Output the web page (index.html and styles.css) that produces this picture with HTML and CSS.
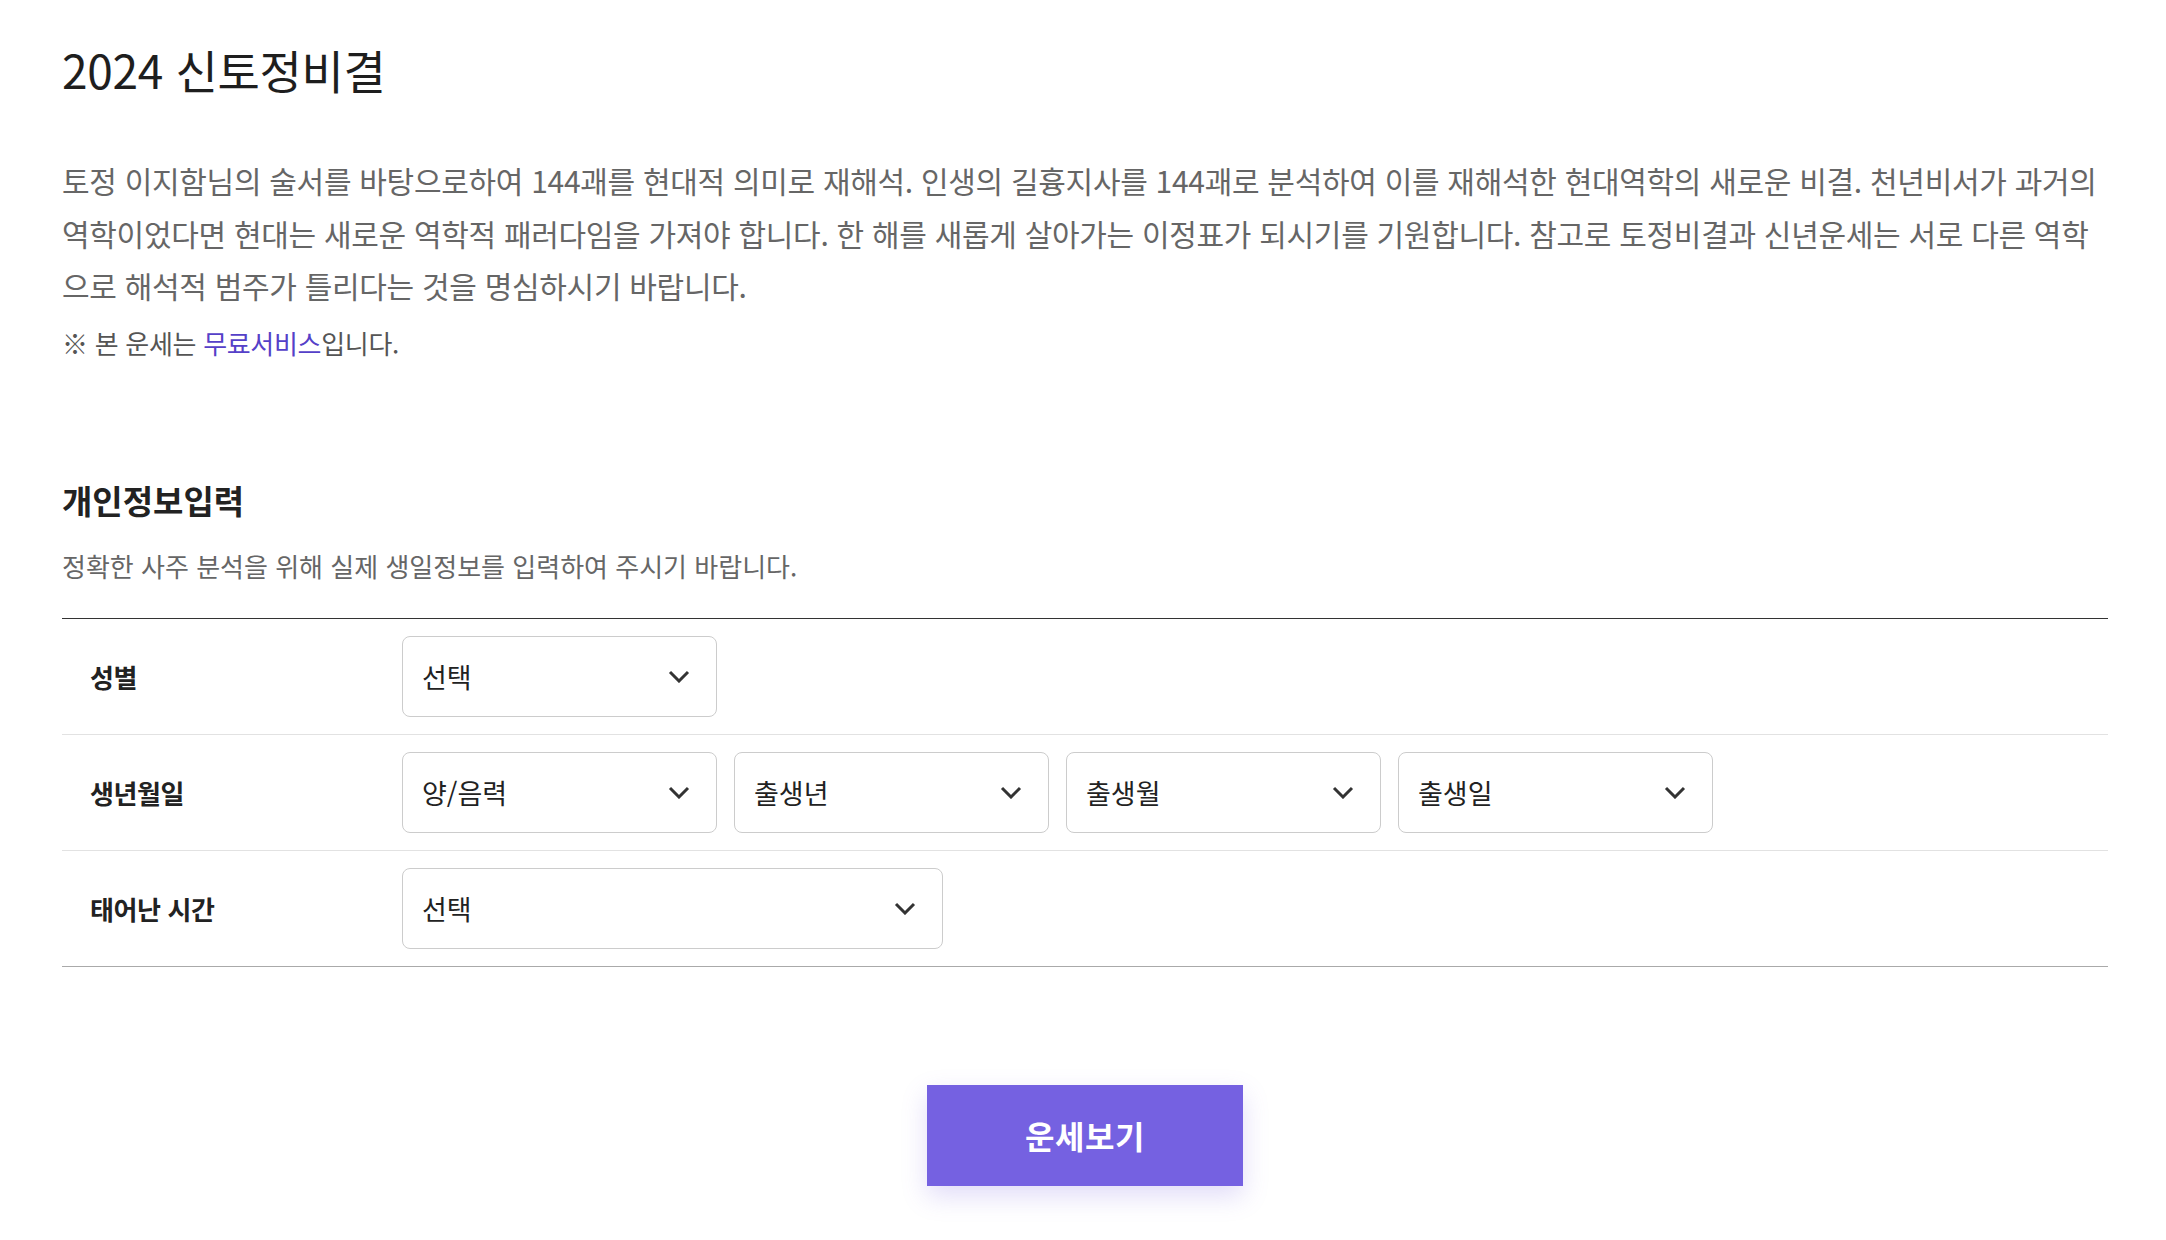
FILE: index.html
```html
<!DOCTYPE html>
<html lang="ko">
<head>
<meta charset="utf-8">
<title>2024 신토정비결</title>
<link rel="stylesheet" href="styles.css">
</head>
<body>
<main class="page">
  <h1 class="title">2024 신토정비결</h1>
  <p class="intro">토정 이지함님의 술서를 바탕으로하여 144괘를 현대적 의미로 재해석. 인생의 길흉지사를 144괘로 분석하여 이를 재해석한 현대역학의 새로운 비결. 천년비서가 과거의 역학이었다면 현대는 새로운 역학적 패러다임을 가져야 합니다. 한 해를 새롭게 살아가는 이정표가 되시기를 기원합니다. 참고로 토정비결과 신년운세는 서로 다른 역학으로 해석적 범주가 틀리다는 것을 명심하시기 바랍니다.</p>
  <p class="note">※ 본 운세는 <a class="free" href="#">무료서비스</a>입니다.</p>

  <section class="form-section">
    <h2 class="section-title">개인정보입력</h2>
    <p class="section-desc">정확한 사주 분석을 위해 실제 생일정보를 입력하여 주시기 바랍니다.</p>

    <div class="form-table">
      <div class="row">
        <div class="label">성별</div>
        <div class="fields">
          <div class="select"><span>선택</span><svg class="chev" viewBox="0 0 22 13"><path d="M2 2 L11 11 L20 2"/></svg></div>
        </div>
      </div>
      <div class="row">
        <div class="label">생년월일</div>
        <div class="fields">
          <div class="select"><span>양/음력</span><svg class="chev" viewBox="0 0 22 13"><path d="M2 2 L11 11 L20 2"/></svg></div>
          <div class="select"><span>출생년</span><svg class="chev" viewBox="0 0 22 13"><path d="M2 2 L11 11 L20 2"/></svg></div>
          <div class="select"><span>출생월</span><svg class="chev" viewBox="0 0 22 13"><path d="M2 2 L11 11 L20 2"/></svg></div>
          <div class="select"><span>출생일</span><svg class="chev" viewBox="0 0 22 13"><path d="M2 2 L11 11 L20 2"/></svg></div>
        </div>
      </div>
      <div class="row">
        <div class="label">태어난 시간</div>
        <div class="fields">
          <div class="select wide"><span>선택</span><svg class="chev" viewBox="0 0 22 13"><path d="M2 2 L11 11 L20 2"/></svg></div>
        </div>
      </div>
    </div>

    <div class="actions">
      <button class="submit" type="button">운세보기</button>
    </div>
  </section>
</main>
</body>
</html>
```

FILE: styles.css
```css
* { box-sizing: border-box; }

html, body {
  margin: 0;
  padding: 0;
  background: #fff;
}

body {
  font-family: "Noto Sans CJK KR", "Noto Sans", sans-serif;
  color: #222;
}

.page {
  padding: 37px 58px 60px 62px;
}

.title {
  margin: 0;
  font-size: 46px;
  line-height: 64px;
  font-weight: 400;
  letter-spacing: -0.3px;
  color: #1e1e1e;
}

.intro {
  margin: 53px 0 0;
  font-size: 30px;
  line-height: 52.5px;
  letter-spacing: -0.3px;
  color: #666;
}

.note {
  margin: 10px 0 0;
  font-size: 26px;
  line-height: 42px;
  letter-spacing: -0.3px;
  color: #555;
}

.free {
  color: #5540c8;
  text-decoration: none;
}

.form-section {
  margin-top: 114px;
}

.section-title {
  margin: 0;
  font-size: 33px;
  line-height: 44px;
  font-weight: 700;
  letter-spacing: 0;
  color: #222;
}

.section-desc {
  margin: 24px 0 0;
  font-size: 26px;
  line-height: 40px;
  letter-spacing: 0;
  color: #666;
}

.form-table {
  margin-top: 32px;
  border-top: 1px solid #333;
  border-bottom: 1px solid #aaa;
}

.row {
  display: flex;
  align-items: center;
  padding: 17px 0;
  border-bottom: 1px solid #e2e2e2;
}

.row:first-child {
  padding-top: 17px;
}

.row:last-child {
  border-bottom: none;
}

.label {
  width: 340px;
  padding-left: 28px;
  font-size: 26px;
  font-weight: 700;
  letter-spacing: -0.4px;
  color: #222;
}

.fields {
  display: flex;
  gap: 17px;
}

.select {
  width: 315px;
  height: 81px;
  border: 1px solid #cccccc;
  border-radius: 8px;
  display: flex;
  align-items: center;
  justify-content: space-between;
  padding: 0 26px 0 19px;
  font-size: 27px;
  letter-spacing: 0;
  color: #222;
  background: #fff;
}

.select.wide {
  width: 541px;
}

.chev {
  width: 22px;
  height: 13px;
  fill: none;
  stroke: #333;
  stroke-width: 3;
}

.actions {
  display: flex;
  justify-content: center;
  margin-top: 118px;
}

.submit {
  width: 316px;
  height: 101px;
  border: none;
  background: #7561e1;
  color: #fff;
  font-family: "Noto Sans CJK KR", "Noto Sans", sans-serif;
  font-size: 32px;
  font-weight: 700;
  letter-spacing: 0.5px;
  box-shadow: 0 10px 24px rgba(117, 97, 225, 0.22);
  cursor: pointer;
}
```
